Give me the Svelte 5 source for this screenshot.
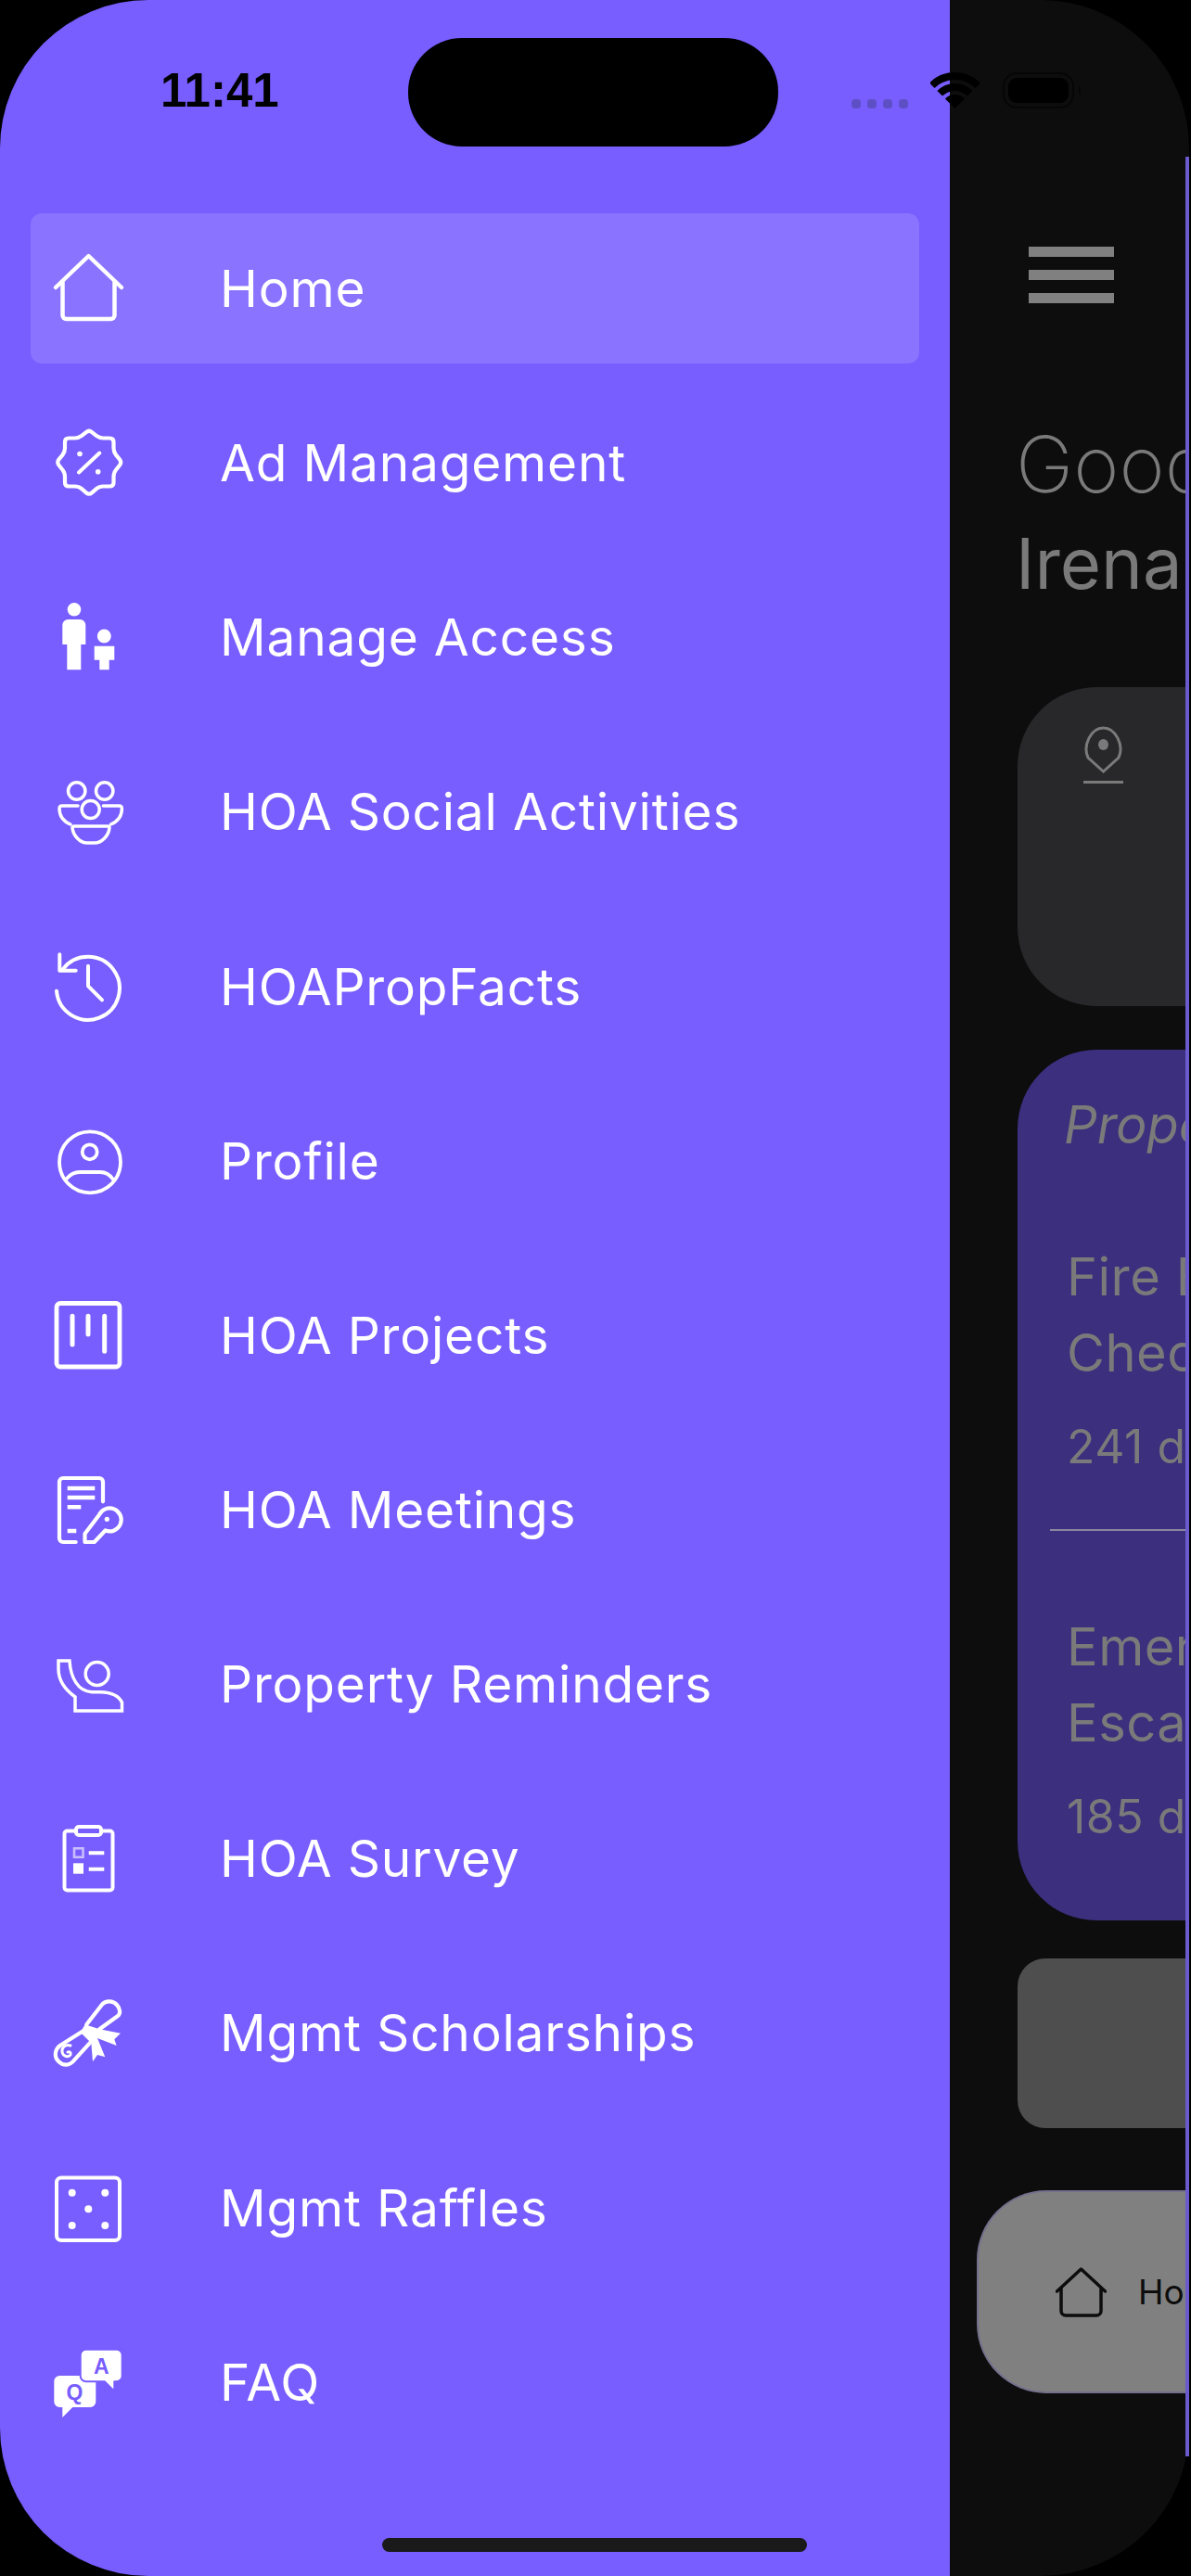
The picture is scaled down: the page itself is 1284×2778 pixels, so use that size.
<script>
  const items = [
    { icon: 'home', label: 'Home', active: true },
    { icon: 'badge', label: 'Ad Management' },
    { icon: 'access', label: 'Manage Access' },
    { icon: 'social', label: 'HOA Social Activities' },
    { icon: 'history', label: 'HOAPropFacts' },
    { icon: 'profile', label: 'Profile' },
    { icon: 'projects', label: 'HOA Projects' },
    { icon: 'meetings', label: 'HOA Meetings' },
    { icon: 'reminders', label: 'Property Reminders' },
    { icon: 'survey', label: 'HOA Survey' },
    { icon: 'scroll', label: 'Mgmt Scholarships' },
    { icon: 'dice', label: 'Mgmt Raffles' },
    { icon: 'faq', label: 'FAQ' }
  ];

  // scalloped outline of the discount badge, corners eased with a small curve
  const badgePoints = [
    [40, 4.5], [51, 13.5], [66.5, 13.5], [66.5, 28.5], [75.5, 39.5], [66.5, 51], [66.5, 65.5], [51, 65.5],
    [40, 75], [29, 65.5], [14, 65.5], [14, 51], [5, 39.5], [14, 28.5], [14, 13.5], [29, 13.5]
  ];

  function roundedPath(points, t) {
    let d = '';
    points.forEach((p, i) => {
      const prev = points[(i + points.length - 1) % points.length];
      const next = points[(i + 1) % points.length];
      const a = [p[0] + (prev[0] - p[0]) * t, p[1] + (prev[1] - p[1]) * t];
      const b = [p[0] + (next[0] - p[0]) * t, p[1] + (next[1] - p[1]) * t];
      d += `${i ? 'L' : 'M'}${a[0]} ${a[1]}Q${p[0]} ${p[1]} ${b[0]} ${b[1]}`;
    });
    return d + 'Z';
  }

  const badgePath = roundedPath(badgePoints, 0.28);
</script>

{#snippet icon(name)}
  <svg class="icon" viewBox="0 0 80 80" width="80" height="80" fill="none" stroke="#fff" stroke-width="4" stroke-linecap="round" stroke-linejoin="round">
    {#if name === 'home'}
      <path stroke-width="4.500" d="M4 39 39.500 5 75 39M11.500 33V69a4 4 0 0 0 4 4H63.500a4 4 0 0 0 4-4V33" />
    {:else if name === 'badge'}
      <path stroke-width="4.200" d={badgePath} />
      <path d="M29 50.500 51.300 29.500" />
      <circle cx="30" cy="30.500" r="2.800" fill="#fff" stroke="none" />
      <circle cx="49.700" cy="49.800" r="2.800" fill="#fff" stroke="none" />
    {:else if name === 'access'}
      <g fill="#fff" stroke="none">
        <circle cx="24" cy="10.300" r="7.300" />
        <path d="M11.300 27a6 6 0 0 1 6-6h13a6 6 0 0 1 6 6V48H31.300V75.300H16.300V48H11.300Z" />
        <circle cx="56.300" cy="39" r="7.500" />
        <path d="M45.700 49.700H67.300V64.700H61.700V75.300H51.300V64.700H45.700Z" />
      </g>
    {:else if name === 'social'}
      <g stroke-width="3.500">
        <circle cx="26.700" cy="18" r="9.200" />
        <circle cx="56.700" cy="18" r="9.200" />
        <circle cx="41.700" cy="38" r="9.500" />
        <path d="M28 34H11q-3 0-3 3q0 12 12 17" />
        <path d="M55.400 34H72.400q3 0 3 3q0 12-12 17" />
        <path d="M24 56H60q2 0 2 2c-1 8-8 16-16 16H38c-8 0-15-8-16-16q0-2 2-2Z" />
      </g>
    {:else if name === 'history'}
      <path d="M12 21A34 34 0 1 1 5 44.700" />
      <path d="M8.300 5.300V22.700H25.700" />
      <path d="M39 17.700V39.300L54 54.300" />
    {:else if name === 'profile'}
      <g stroke-width="3.800">
        <circle cx="41" cy="41.300" r="33" />
        <circle cx="40.700" cy="30.300" r="8" />
        <path d="M16 59C20 54 25 52 30 52H52C57 52 62 54 66 60" />
      </g>
    {:else if name === 'projects'}
      <rect x="5" y="5.500" width="68" height="68.500" rx="4" stroke-width="4.800" />
      <path stroke-width="5" d="M22 19.300V50M39 19.300V39M56.700 19.300V57.300" />
    {:else if name === 'meetings'}
      <g stroke-width="4.200">
        <path d="M25.700 75H12a4 4 0 0 1-4-4V10a4 4 0 0 1 4-4H51a4 4 0 0 1 4 4V31.300" />
        <path stroke-linecap="butt" stroke-width="4.500" d="M16.700 17H46.300M16.700 27H46.300M16.700 37.300H31.300M16.700 63H26.300" />
        <path d="M50.700 46A12.500 12.500 0 1 1 57.500 62.500L45.700 75H35.500V66Z" />
        <circle cx="59.300" cy="50.300" r="2.600" fill="#fff" stroke="none" />
      </g>
    {:else if name === 'reminders'}
      <g stroke-width="3.500" stroke-linejoin="miter">
        <circle cx="48.700" cy="29" r="12.500" />
        <path d="M7 15H19C20 33 28 48 43 48.700H52C62 49 72 52 75.500 60V69H25V54C14 46 7 36 7 24Z" />
      </g>
    {:else if name === 'survey'}
      <rect x="13.500" y="10.500" width="52" height="64" rx="3" />
      <rect x="26" y="6" width="27" height="9" rx="3" fill="#785dff" />
      <rect x="24" y="29.300" width="9.500" height="9.500" stroke="#c9bdff" stroke-width="2.600" stroke-linejoin="miter" />
      <rect x="23" y="45.300" width="11" height="11.400" fill="#fff" stroke="none" />
      <path stroke-linecap="butt" d="M39.700 34.300H56.300M39.700 51.700H56.300" />
    {:else if name === 'scroll'}
      <path stroke-width="4.200" d="M37.300 31.300 54 9.700C58 5 66 5.500 70 10S74 20 71 22L51.300 36.300M34 38 9 53.700C3 58 2 66 7 71S19 76 24 69.700L40.700 51.300" />
      <path stroke-width="3" d="M20 54c-5-2-10 2-9 7c1 5 7 6 9 3c1-2-1-4-3-3" />
      <path fill="#fff" stroke="none" d="M35.700 31.300 51.300 36.300 74 40.700 67.300 47.300 69.700 54 49 46 57.300 66.300 49 64 44 71.300 42.300 51.300 30.700 39.700Z" />
    {:else if name === 'dice'}
      <rect x="5" y="7.500" width="68" height="67.500" rx="5" />
      <g fill="#fff" stroke="none">
        <circle cx="21.700" cy="23.700" r="4" />
        <circle cx="57.300" cy="23.700" r="4" />
        <circle cx="39.300" cy="41.300" r="4" />
        <circle cx="21.700" cy="59" r="4" />
        <circle cx="57.300" cy="59" r="4" />
      </g>
    {:else if name === 'faq'}
      <g fill="#fff" stroke="none">
        <path d="M8.300 33H41.300a6 6 0 0 1 6 6V61a6 6 0 0 1-6 6H22.300L11.300 78V67H8.300a6 6 0 0 1-6-6V39a6 6 0 0 1 6-6Z" />
        <path stroke="#785dff" stroke-width="2" d="M36.700 4.700H69.700a6 6 0 0 1 6 6V33.300a6 6 0 0 1-6 6H67.300V49.700L56.700 39.300H36.700a6 6 0 0 1-6-6V10.700a6 6 0 0 1 6-6Z" />
      </g>
      <text class="bubble-letter" x="53.300" y="30.500">A</text>
      <text class="bubble-letter" x="24.500" y="58.500">Q</text>
    {/if}
  </svg>
{/snippet}

<div class="device">
  <div class="screen">
    <aside class="drawer">
      <nav class="menu">
        {#each items as item}
          <div class="row" class:active={item.active}>
            {@render icon(item.icon)}
            <span>{item.label}</span>
          </div>
        {/each}
      </nav>
      <div class="home-bar"></div>
    </aside>

    <main class="content">
      <div class="burger"><i></i><i></i><i></i></div>
      <div class="greeting">
        <p class="hello">Good Morning</p>
        <p class="name">Irena</p>
      </div>
      <section class="card location">
        <svg viewBox="0 0 43 63" width="43" height="63" fill="none" stroke="#7a7a7a" stroke-width="3">
          <path d="M21.500 50 5 35C-1 22 8 3 21.500 3S44 22 38 35Z" />
          <ellipse cx="21.500" cy="21" rx="5.500" ry="6" fill="#7a7a7a" stroke="none" />
          <path d="M0 61.500H43" />
        </svg>
      </section>
      <section class="card reminders">
        <h2>Property Reminders</h2>
        <div class="reminder">
          <p>Fire Extinguisher<br />Check</p>
          <small>241 days</small>
        </div>
        <hr />
        <div class="reminder second">
          <p>Emergency<br />Escape</p>
          <small>185 days</small>
        </div>
      </section>
      <section class="card gray"></section>
      <div class="tabbar">
        <svg viewBox="0 0 55 54" width="55" height="54" fill="none" stroke="#0d0d0d" stroke-width="3.500" stroke-linecap="round" stroke-linejoin="round">
          <path d="M1.500 26 27.500 2 53.500 26M6 22V47a5 5 0 0 0 5 5H44a5 5 0 0 0 5-5V22" />
        </svg>
        <span>Home</span>
      </div>
    </main>
  </div>

  <div class="edge-strip"></div>
  <div class="island"></div>
  <div class="time">11:41</div>
  <div class="signal"><i></i><i></i><i></i><i></i></div>
  <svg class="wifi" viewBox="0 0 53 39" width="53" height="39" fill="none" stroke="#000" stroke-width="8">
    <path d="M1.750 14.250A35 35 0 0 1 51.250 14.250" />
    <path d="M10.240 22.740A23 23 0 0 1 42.760 22.740" />
    <path fill="#000" stroke="none" d="M26.500 39 15.900 28.400A15 15 0 0 1 37.100 28.400Z" />
  </svg>
  <div class="battery"><i></i></div>
</div>

<style>
  :global(body) {
    margin: 0;
    background: #000;
  }

  .device {
    position: relative;
    width: 1284px;
    height: 2778px;
    box-sizing: border-box;
    padding-right: 2px;
    background: #000;
    overflow: hidden;
    font-family: "Inter", "Liberation Sans", sans-serif;
  }

  .screen {
    display: flex;
    height: 100%;
    border-radius: 160px;
    overflow: hidden;
    background: #0d0d0d;
  }

  .drawer {
    position: relative;
    flex: 0 0 1024px;
    box-sizing: border-box;
    padding: 230px 33px 0;
    background: #785dff;
  }

  .menu {
    display: flex;
    flex-direction: column;
    gap: 26.150px;
  }

  .row {
    display: flex;
    align-items: center;
    height: 162px;
    padding-left: 23px;
    gap: 101px;
    color: #fff;
    font-size: 55px;
    letter-spacing: 0.800px;
    border-radius: 12px;
    box-sizing: border-box;
  }

  .row.active {
    background: #8a73ff;
  }

  .icon {
    flex: none;
  }

  .bubble-letter {
    fill: #785dff;
    font: bold 23px "Liberation Sans", sans-serif;
    letter-spacing: 0;
    text-anchor: middle;
    stroke: none;
  }

  .home-bar {
    position: absolute;
    left: 412px;
    bottom: 26px;
    width: 458px;
    height: 15px;
    border-radius: 8px;
    background: #1a1a1a;
  }

  .content {
    flex: 1;
    min-width: 0;
    padding: 266px 0 0 73px;
    overflow: hidden;
    color: #7a7a7a;
    white-space: nowrap;
  }

  .burger {
    display: flex;
    flex-direction: column;
    gap: 14px;
    width: 92px;
    margin-left: 12px;
  }

  .burger i {
    height: 11px;
    background: #808080;
  }

  .greeting {
    margin: 112px 0 0 -2px;
  }

  .greeting p {
    margin: 0;
  }

  .hello {
    font-size: 84px;
    font-weight: 200;
    line-height: 123px;
  }

  .name {
    font-size: 76px;
    font-weight: 400;
    line-height: 90px;
  }

  .card {
    width: 400px;
    box-sizing: border-box;
  }

  .location {
    height: 344px;
    margin-top: 89px;
    padding: 41px 0 0 71px;
    border-radius: 85px;
    background: #28282a;
  }

  .location svg {
    display: block;
  }

  .reminders {
    height: 939px;
    margin-top: 47px;
    padding: 46px 0 0 53px;
    border-radius: 85px;
    background: #3b2f7e;
  }

  .reminders h2 {
    margin: 0 0 0 -3px;
    font-size: 56px;
    font-style: italic;
    font-weight: 400;
    line-height: 70px;
  }

  .reminder {
    margin-top: 88px;
  }

  .reminder p {
    margin: 0;
    font-size: 56px;
    letter-spacing: 0.500px;
    line-height: 82px;
  }

  .reminder small {
    display: block;
    margin-top: 30px;
    font-size: 50px;
    letter-spacing: 0.500px;
    line-height: 60px;
  }

  .reminders hr {
    height: 2px;
    margin: 59px 0 0 -18px;
    border: 0;
    background: #8a86a0;
  }

  .reminder.second {
    margin-top: 84px;
  }

  .gray {
    height: 183px;
    margin-top: 41px;
    border-radius: 30px;
    background: #4e4e4e;
  }

  .tabbar {
    display: flex;
    align-items: center;
    gap: 34px;
    width: 500px;
    height: 219px;
    margin: 67px 0 0 -44px;
    padding-left: 83px;
    box-sizing: border-box;
    border: 2px solid #74708c;
    border-right: 0;
    border-radius: 75px;
    background: #808080;
    color: #0d0d0d;
    font-size: 37px;
  }

  .edge-strip {
    position: absolute;
    left: 1278px;
    top: 169px;
    width: 4px;
    height: 2480px;
    background: #6a5acd;
  }

  .island {
    position: absolute;
    left: 440px;
    top: 41px;
    width: 399px;
    height: 117px;
    border-radius: 58px;
    background: #000;
  }

  .time {
    position: absolute;
    left: 173px;
    top: 68px;
    font: bold 51px/60px "Liberation Sans", sans-serif;
    color: #000;
  }

  .signal {
    position: absolute;
    left: 918px;
    top: 107px;
    display: flex;
    gap: 7px;
  }

  .signal i {
    width: 10px;
    height: 10px;
    border-radius: 4px;
    background: #5f4fc4;
  }

  .wifi {
    position: absolute;
    left: 1003px;
    top: 78px;
  }

  .battery {
    position: absolute;
    left: 1081px;
    top: 78px;
    width: 77px;
    height: 39px;
    padding: 4px 4px;
    box-sizing: border-box;
    border: 2px solid #060606;
    border-radius: 15px;
  }

  .battery i {
    display: block;
    height: 100%;
    border-radius: 9px;
    background: #000;
  }

  .battery::after {
    content: "";
    position: absolute;
    left: 80px;
    top: 13px;
    width: 2px;
    height: 9px;
    background: #060606;
  }
</style>
